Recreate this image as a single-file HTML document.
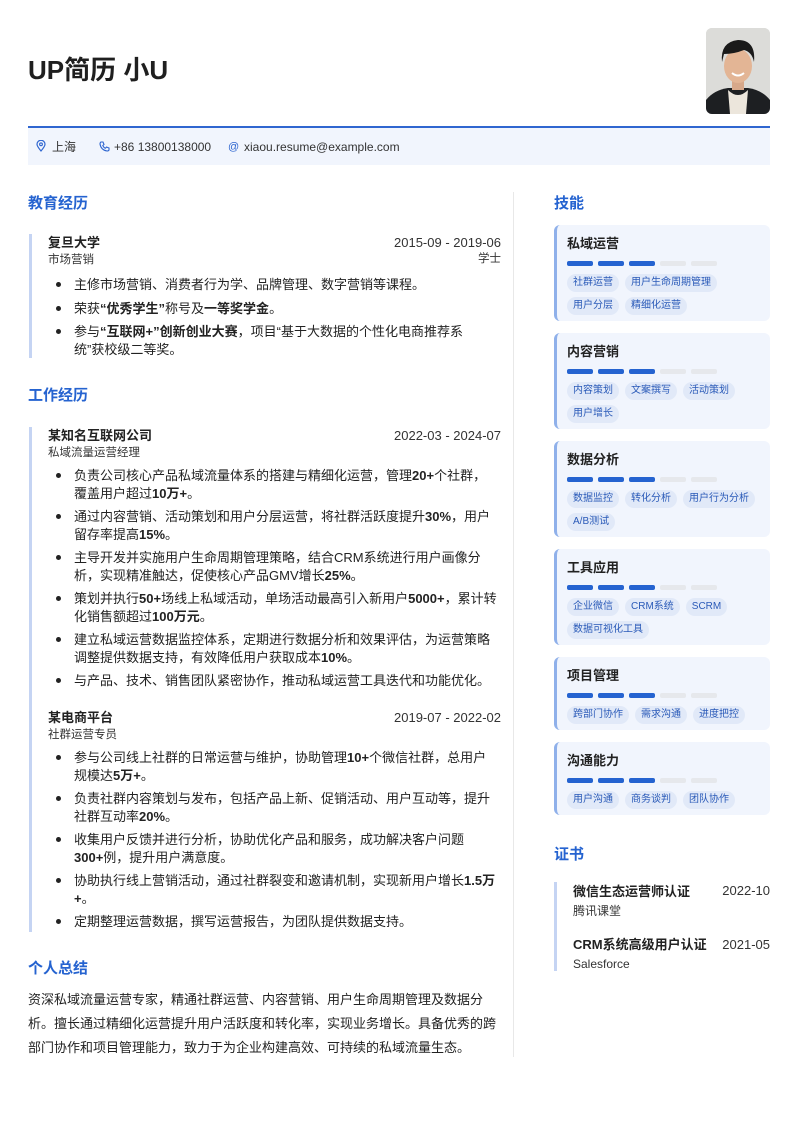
<!DOCTYPE html>
<html><head><meta charset="utf-8">
<style>
*{margin:0;padding:0;box-sizing:border-box}
body{width:799px;height:1130px;background:#fff;font-family:"Liberation Sans","Noto Sans CJK SC",sans-serif;color:#222;position:relative;overflow:hidden}
.abs{position:absolute}
h1{position:absolute;left:28px;top:52px;font-size:26px;font-weight:600;color:#1f1f1f;line-height:36px}
.photo{position:absolute;left:706px;top:28px;width:64px;height:86px;border-radius:6px;background:#d8d8d6;overflow:hidden}
.line{position:absolute;left:28px;top:126px;width:742px;height:2px;background:#2f66d0}
.contact{position:absolute;left:28px;top:128px;width:742px;height:37px;background:#f1f5fd;font-size:12px;color:#333;line-height:38px}
.contact span{position:absolute;top:0}
.sec{position:absolute;font-size:15px;font-weight:700;color:#2563d0;line-height:20px}
.entry{position:absolute;left:29px;width:472px;border-left:3px solid #c5d4f3;padding-left:16px}
.t{font-size:13px;font-weight:700;line-height:18px;color:#222}
.d{position:absolute;right:0;top:0;font-size:13px;line-height:18px;color:#333}
.s{font-size:11.5px;line-height:17px;color:#333}
ul{list-style:none;margin-top:5px}
li{position:relative;padding-left:26px;font-size:13px;line-height:17.5px;margin-bottom:6px;color:#222}
li:before{content:"";position:absolute;left:8px;top:6px;width:5px;height:5px;border-radius:50%;background:#222}
b{font-weight:700}
.divider{position:absolute;left:513px;top:192px;width:1px;height:865px;background:#e8e8e8}
.card{position:absolute;left:554px;width:216px;background:#f1f5fd;border-left:3px solid #8fb0ea;border-radius:6px;padding:10px 0 0 10px}
.card .ct{font-size:13px;font-weight:700;line-height:18px;color:#222}
.bars{margin-top:8px;height:5px;display:flex;gap:5px}
.bars i{width:26px;height:5px;border-radius:2px;background:#e6e8ec}
.bars i.on{background:#2563d0}
.tags{margin-top:8px;display:flex;flex-wrap:wrap;gap:5px 6px;width:200px}
.tags span{background:#e1e9f8;color:#2a5ab8;font-size:10px;line-height:18px;padding:0 6px;border-radius:9px}
.cert{position:absolute;left:554px;width:216px;border-left:3px solid #c5d4f3;padding-left:16px}
.summary{position:absolute;left:28px;top:988px;width:472px;font-size:13px;line-height:24px;color:#222}
</style></head><body>
<h1>UP简历 小U</h1>
<div class="photo">
<svg width="64" height="86" viewBox="0 0 64 86">
<rect width="64" height="86" fill="#dcdcd9"/>
<path d="M0 86 L0 72 Q8 62 22 60 L42 60 Q56 62 64 72 L64 86Z" fill="#1d1f22"/>
<path d="M22 62 Q32 72 42 62 L40 86 L24 86Z" fill="#ece6dc"/>
<rect x="26" y="48" width="12" height="14" fill="#d7a88a"/>
<ellipse cx="32" cy="38" rx="14" ry="17" fill="#e3b595"/>
<path d="M16 34 Q14 14 32 12 Q50 12 48 34 Q46 24 38 22 Q28 26 18 26Z" fill="#1a1a1a"/>
<path d="M26 45 Q32 50 38 45" stroke="#fff" stroke-width="2" fill="none"/>
</svg></div>
<div class="line"></div>
<div class="contact">
<span style="left:8px"><svg width="10" height="12" viewBox="0 0 10 12" style="vertical-align:-1px"><path d="M5 11 C2 7.5 1 6 1 4.3 A4 4 0 0 1 9 4.3 C9 6 8 7.5 5 11Z" fill="none" stroke="#2f66d0" stroke-width="1.2"/><circle cx="5" cy="4.3" r="1.4" fill="none" stroke="#2f66d0" stroke-width="1.1"/></svg></span>
<span style="left:24px">上海</span>
<span style="left:71px"><svg width="11" height="11" viewBox="0 0 11 11" style="vertical-align:-1px"><path d="M2 1 L4 1 L5 3.5 L3.8 4.5 Q5 7 6.5 7.2 L7.5 6 L10 7 L10 9 Q9.5 10 8 10 Q2 9 1 3 Q1 1.5 2 1Z" fill="none" stroke="#2f66d0" stroke-width="1.1"/></svg></span>
<span style="left:86px">+86 13800138000</span>
<span style="left:200px;color:#2f66d0;font-size:11px">@</span>
<span style="left:216px">xiaou.resume@example.com</span>
</div>

<div class="sec" style="left:28px;top:194px">教育经历</div>
<div class="entry" style="top:234px;height:124px">
<div class="t">复旦大学</div><div class="d">2015-09 - 2019-06</div>
<div class="s">市场营销</div><div class="s abs" style="right:0;top:17px">学士</div>
<ul style="margin-top:7px">
<li>主修市场营销、消费者行为学、品牌管理、数字营销等课程。</li>
<li>荣获<b>“优秀学生”</b>称号及<b>一等奖学金</b>。</li>
<li>参与<b>“互联网+”创新创业大赛</b>，项目“基于大数据的个性化电商推荐系<br>统”获校级二等奖。</li>
</ul></div>

<div class="sec" style="left:28px;top:386px">工作经历</div>
<div class="entry" style="top:427px;height:505px">
<div class="t">某知名互联网公司</div><div class="d">2022-03 - 2024-07</div>
<div class="s">私域流量运营经理</div>
<ul>
<li>负责公司核心产品私域流量体系的搭建与精细化运营，管理<b>20+</b>个社群，<br>覆盖用户超过<b>10万+</b>。</li>
<li>通过内容营销、活动策划和用户分层运营，将社群活跃度提升<b>30%</b>，用户<br>留存率提高<b>15%</b>。</li>
<li>主导开发并实施用户生命周期管理策略，结合CRM系统进行用户画像分<br>析，实现精准触达，促使核心产品GMV增长<b>25%</b>。</li>
<li>策划并执行<b>50+</b>场线上私域活动，单场活动最高引入新用户<b>5000+</b>，累计转<br>化销售额超过<b>100万元</b>。</li>
<li>建立私域运营数据监控体系，定期进行数据分析和效果评估，为运营策略<br>调整提供数据支持，有效降低用户获取成本<b>10%</b>。</li>
<li>与产品、技术、销售团队紧密协作，推动私域运营工具迭代和功能优化。</li>
</ul>
<div style="position:absolute;left:16px;right:0;top:282px">
<div class="t">某电商平台</div><div class="d">2019-07 - 2022-02</div>
<div class="s">社群运营专员</div>
<ul>
<li>参与公司线上社群的日常运营与维护，协助管理<b>10+</b>个微信社群，总用户<br>规模达<b>5万+</b>。</li>
<li>负责社群内容策划与发布，包括产品上新、促销活动、用户互动等，提升<br>社群互动率<b>20%</b>。</li>
<li>收集用户反馈并进行分析，协助优化产品和服务，成功解决客户问题<br><b>300+</b>例，提升用户满意度。</li>
<li>协助执行线上营销活动，通过社群裂变和邀请机制，实现新用户增长<b>1.5万</b><br><b>+</b>。</li>
<li>定期整理运营数据，撰写运营报告，为团队提供数据支持。</li>
</ul></div>
</div>

<div class="sec" style="left:28px;top:959px">个人总结</div>
<div class="summary">资深私域流量运营专家，精通社群运营、内容营销、用户生命周期管理及数据分<br>析。擅长通过精细化运营提升用户活跃度和转化率，实现业务增长。具备优秀的跨<br>部门协作和项目管理能力，致力于为企业构建高效、可持续的私域流量生态。</div>

<div class="divider"></div>

<div class="sec" style="left:554px;top:194px">技能</div>
<div class="card" style="top:225px;height:96px"><div class="ct">私域运营</div><div class="bars"><i class="on"></i><i class="on"></i><i class="on"></i><i></i><i></i></div><div class="tags"><span>社群运营</span><span>用户生命周期管理</span><span>用户分层</span><span>精细化运营</span></div></div>
<div class="card" style="top:333px;height:96px"><div class="ct">内容营销</div><div class="bars"><i class="on"></i><i class="on"></i><i class="on"></i><i></i><i></i></div><div class="tags"><span>内容策划</span><span>文案撰写</span><span>活动策划</span><span>用户增长</span></div></div>
<div class="card" style="top:441px;height:96px"><div class="ct">数据分析</div><div class="bars"><i class="on"></i><i class="on"></i><i class="on"></i><i></i><i></i></div><div class="tags"><span>数据监控</span><span>转化分析</span><span>用户行为分析</span><span>A/B测试</span></div></div>
<div class="card" style="top:549px;height:96px"><div class="ct">工具应用</div><div class="bars"><i class="on"></i><i class="on"></i><i class="on"></i><i></i><i></i></div><div class="tags"><span>企业微信</span><span>CRM系统</span><span>SCRM</span><span>数据可视化工具</span></div></div>
<div class="card" style="top:657px;height:73px"><div class="ct">项目管理</div><div class="bars"><i class="on"></i><i class="on"></i><i class="on"></i><i></i><i></i></div><div class="tags"><span>跨部门协作</span><span>需求沟通</span><span>进度把控</span></div></div>
<div class="card" style="top:742px;height:73px"><div class="ct">沟通能力</div><div class="bars"><i class="on"></i><i class="on"></i><i class="on"></i><i></i><i></i></div><div class="tags"><span>用户沟通</span><span>商务谈判</span><span>团队协作</span></div></div>

<div class="sec" style="left:554px;top:845px">证书</div>
<div class="cert" style="top:882px;height:89px">
<div class="t" style="margin-top:1px">微信生态运营师认证</div><div class="d">2022-10</div>
<div class="s" style="font-size:12px;line-height:20px">腾讯课堂</div>
<div style="position:relative;margin-top:15px"><div class="t">CRM系统高级用户认证</div><div class="d">2021-05</div></div>
<div class="s" style="font-size:12px;line-height:20px">Salesforce</div>
</div>
</body></html>
